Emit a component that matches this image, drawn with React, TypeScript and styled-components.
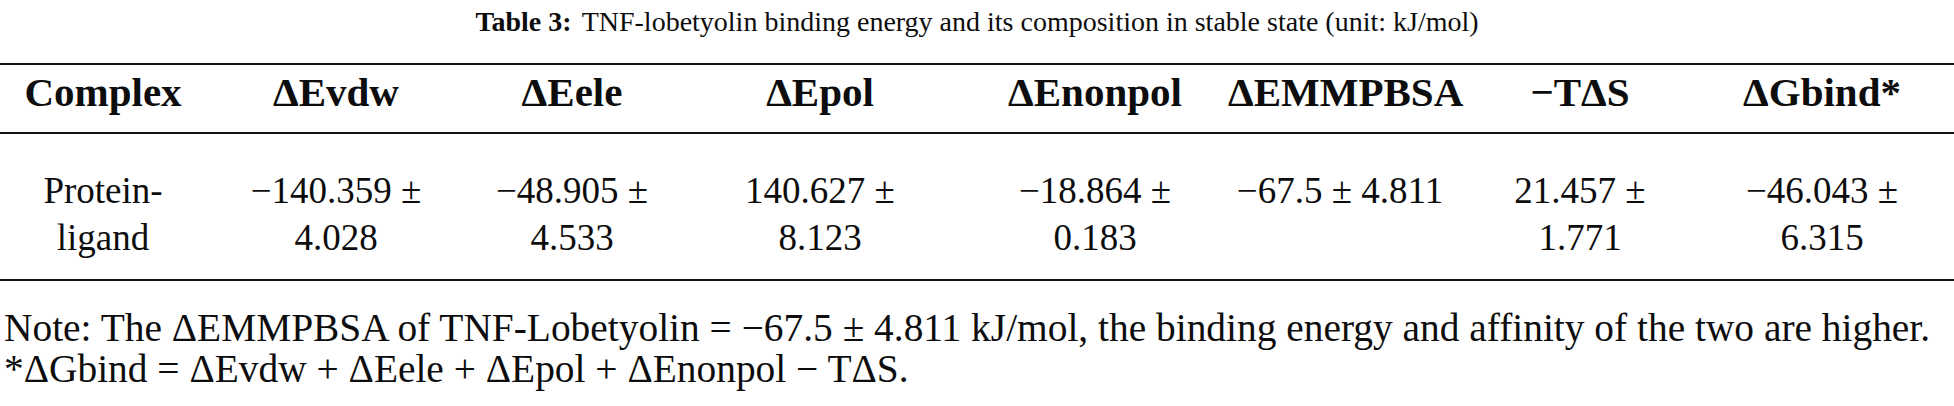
import React from "react";
import styled, { createGlobalStyle } from "styled-components";

const GlobalStyle = createGlobalStyle`
  html, body {
    margin: 0;
    padding: 0;
    background: #ffffff;
  }
  body {
    font-family: "Liberation Serif", "DejaVu Serif", serif;
    color: #0d0d0d;
  }
`;

const Page = styled.div`
  width: 1954px;
  height: 406px;
  overflow: hidden;
  background: #ffffff;
`;

const Caption = styled.div`
  text-align: center;
  font-size: 28px;
  line-height: 32px;
  padding-top: 6px;
  height: 50px;
  box-sizing: border-box;
`;

const CaptionLabel = styled.b`
  font-weight: 700;
  margin-right: 10px;
`;

const Table = styled.div`
  border-top: 2px solid #111;
  border-bottom: 2px solid #111;
  margin-top: 13px;
`;

const Row = styled.div<{ header?: boolean }>`
  display: grid;
  grid-template-columns: 206px 260px 212px 284px 266px 224px 256px 228px;
  align-items: ${({ header }) => (header ? "center" : "start")};
  border-bottom: ${({ header }) => (header ? "2px solid #111" : "none")};
  height: ${({ header }) => (header ? 69 : 145)}px;
  padding: ${({ header }) => (header ? "0 0 13px" : "33px 0 0")};
  box-sizing: border-box;
`;

const Cell = styled.div<{ header?: boolean }>`
  text-align: center;
  white-space: nowrap;
  font-size: ${({ header }) => (header ? 41 : 37)}px;
  font-weight: ${({ header }) => (header ? 700 : 400)};
  line-height: 47px;
`;

const Notes = styled.div`
  padding: 27px 0 0 4px;
  font-size: 39.4px;
  line-height: 41px;
  white-space: nowrap;
`;

const headers = [
  "Complex",
  "ΔEvdw",
  "ΔEele",
  "ΔEpol",
  "ΔEnonpol",
  "ΔEMMPBSA",
  "−TΔS",
  "ΔGbind*",
];

const values: string[][] = [
  ["Protein-", "ligand"],
  ["−140.359 ±", "4.028"],
  ["−48.905 ±", "4.533"],
  ["140.627 ±", "8.123"],
  ["−18.864 ±", "0.183"],
  ["−67.5 ± 4.811"],
  ["21.457 ±", "1.771"],
  ["−46.043 ±", "6.315"],
];

const App = () => {
  return (
    <Page>
      <GlobalStyle />
      <Caption>
        <CaptionLabel>Table 3:</CaptionLabel>
        TNF-lobetyolin binding energy and its composition in stable state
        (unit: kJ/mol)
      </Caption>
      <Table>
        <Row header>
          {headers.map(h => (
            <Cell header key={h}>
              {h}
            </Cell>
          ))}
        </Row>
        <Row>
          {values.map((lines, i) => (
            <Cell key={i}>
              {lines.map((line, j) => (
                <div key={j}>{line}</div>
              ))}
            </Cell>
          ))}
        </Row>
      </Table>
      <Notes>
        <div>
          Note: The ΔEMMPBSA of TNF-Lobetyolin = −67.5 ± 4.811 kJ/mol, the
          binding energy and affinity of the two are higher.
        </div>
        <div>*ΔGbind = ΔEvdw + ΔEele + ΔEpol + ΔEnonpol − TΔS.</div>
      </Notes>
    </Page>
  );
};

export default App;
